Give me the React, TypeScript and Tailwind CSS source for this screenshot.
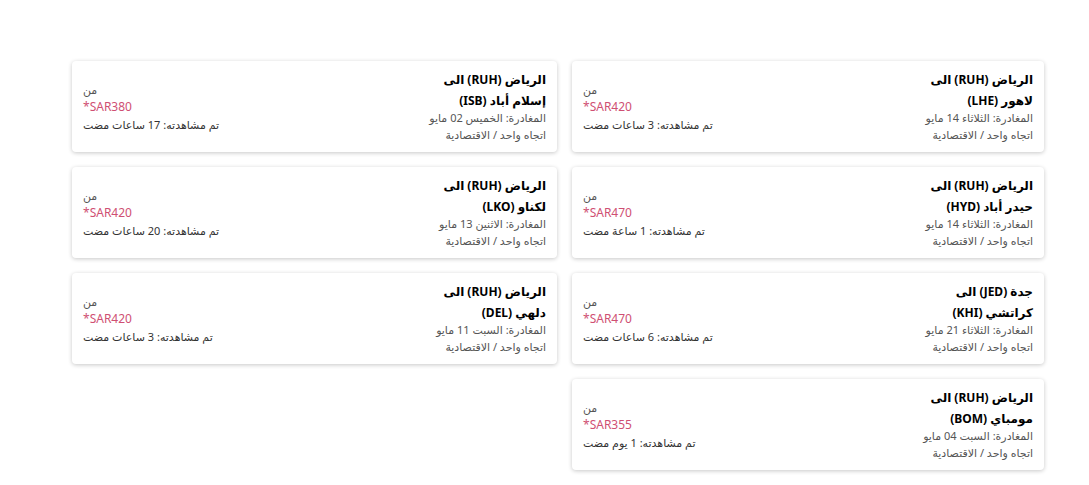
import React from "react";

type Flight = {
  from: string;
  to: string;
  date: string;
  price: string;
  seen: string;
};

const flights: Flight[] = [
  { from: "الرياض (RUH) الى", to: "لاهور (LHE)", date: "المغادرة: الثلاثاء 14 مايو", price: "SAR420*", seen: "تم مشاهدته: 3 ساعات مضت" },
  { from: "الرياض (RUH) الى", to: "إسلام أباد (ISB)", date: "المغادرة: الخميس 02 مايو", price: "SAR380*", seen: "تم مشاهدته: 17 ساعات مضت" },
  { from: "الرياض (RUH) الى", to: "حيدر أباد (HYD)", date: "المغادرة: الثلاثاء 14 مايو", price: "SAR470*", seen: "تم مشاهدته: 1 ساعة مضت" },
  { from: "الرياض (RUH) الى", to: "لكناو (LKO)", date: "المغادرة: الاثنين 13 مايو", price: "SAR420*", seen: "تم مشاهدته: 20 ساعات مضت" },
  { from: "جدة (JED) الى", to: "كراتشي (KHI)", date: "المغادرة: الثلاثاء 21 مايو", price: "SAR470*", seen: "تم مشاهدته: 6 ساعات مضت" },
  { from: "الرياض (RUH) الى", to: "دلهي (DEL)", date: "المغادرة: السبت 11 مايو", price: "SAR420*", seen: "تم مشاهدته: 3 ساعات مضت" },
  { from: "الرياض (RUH) الى", to: "مومباي (BOM)", date: "المغادرة: السبت 04 مايو", price: "SAR355*", seen: "تم مشاهدته: 1 يوم مضت" },
];

function Card({ f }: { f: Flight }) {
  return (
    <div className="h-[91px] rounded-[4px] bg-white shadow-[0_1px_4px_rgba(0,0,0,0.22)] flex justify-between items-start px-[11px] pt-[8px]">
      <div className="flex flex-col">
        <div className="text-[12px] font-bold text-black leading-[21px]">{f.from}</div>
        <div className="text-[12px] font-bold text-black leading-[21px]">{f.to}</div>
        <div className="text-[11px] text-[#555] leading-[17px] -mt-[2px]">{f.date}</div>
        <div className="text-[11px] text-[#555] leading-[17px]">اتجاه واحد / الاقتصادية</div>
      </div>
      <div className="flex flex-col items-end self-center -mt-[8px]">
        <div className="text-[11px] text-[#555] leading-[17px]">من</div>
        <div className="text-[12px] text-[#cf4f73] leading-[18px]">{f.price}</div>
        <div className="text-[11px] text-[#333] leading-[17px]">{f.seen}</div>
      </div>
    </div>
  );
}

export default function App() {
  return (
    <div
      dir="rtl"
      className="w-[1089px] h-[485px] bg-white overflow-hidden"
      style={{ fontFamily: '"Noto Sans", "DejaVu Sans", sans-serif' }}
    >
      <div className="grid grid-cols-[472px_485px] gap-x-[15px] gap-y-[15px] pt-[61px] pr-[45px]">
        {flights.map((f, i) => (
          <Card key={i} f={f} />
        ))}
      </div>
    </div>
  );
}
